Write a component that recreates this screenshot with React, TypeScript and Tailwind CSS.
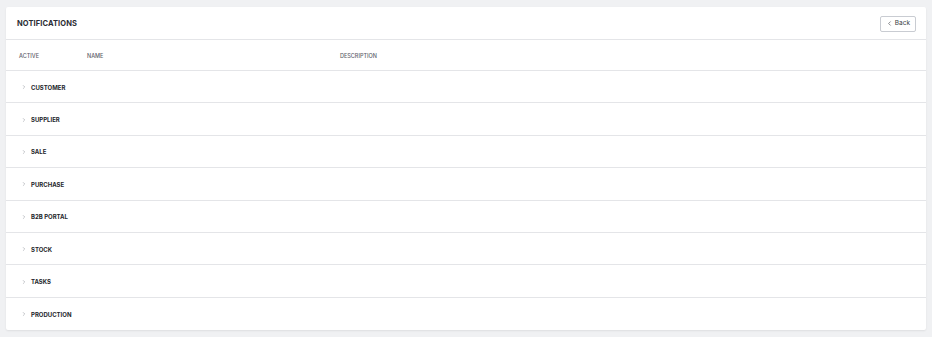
import { ChevronLeft, ChevronRight } from "lucide-react";

const groups = [
  "CUSTOMER",
  "SUPPLIER",
  "SALE",
  "PURCHASE",
  "B2B PORTAL",
  "STOCK",
  "TASKS",
  "PRODUCTION",
];

export default function App() {
  return (
    <div
      className="min-h-[337px] w-full bg-[#f0f1f3] px-[6px] pt-[7px] pb-[6px]"
      style={{ fontFamily: "Inter, 'Noto Sans', sans-serif" }}
    >
      <div className="bg-white rounded-[2px] shadow-[0_1px_2px_rgba(0,0,0,0.08)]">
        {/* Header */}
        <div className="flex items-center justify-between h-[33px] pl-[11px] pr-[10px] pt-[1px] border-b border-[#e4e5e8]">
          <h1 className="text-[7.5px] font-bold text-[#2b2d33] tracking-[0.1px]">NOTIFICATIONS</h1>
          <button className="flex items-center gap-[2px] h-[16px] px-[5px] border border-[#c9ccd2] rounded-[2px] text-[6.5px] text-[#3a3d44] bg-white">
            <ChevronLeft className="w-[7px] h-[7px]" strokeWidth={2} />
            Back
          </button>
        </div>

        {/* Column headers */}
        <div className="flex items-center h-[31px] pt-[3px] border-b border-[#e4e5e8] text-[5.5px] font-medium leading-none text-[#5c6069]">
          <div className="w-[81px] pl-[13px]">ACTIVE</div>
          <div className="w-[253px]">NAME</div>
          <div>DESCRIPTION</div>
        </div>

        {/* Groups */}
        {groups.map((g, i) => (
          <div
            key={g}
            className={`flex items-center h-[32.4px] pl-[15px] pt-[1px] ${
              i < groups.length - 1 ? "border-b border-[#e4e5e8]" : ""
            }`}
          >
            <ChevronRight className="w-[6px] h-[6px] text-[#8a8e96]" strokeWidth={2} />
            <span className="ml-[4px] text-[6px] font-bold text-[#24262b]">{g}</span>
          </div>
        ))}
      </div>
    </div>
  );
}
